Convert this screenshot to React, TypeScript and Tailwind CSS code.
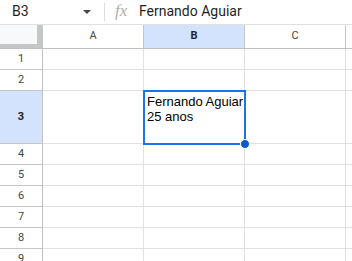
import React from "react";

const cols = ["A", "B", "C", "D"];
const rows: { n: number; h: string }[] = [
  { n: 1, h: "h-[21px]" },
  { n: 2, h: "h-[21px]" },
  { n: 3, h: "h-[53px]" },
  { n: 4, h: "h-[21px]" },
  { n: 5, h: "h-[21px]" },
  { n: 6, h: "h-[21px]" },
  { n: 7, h: "h-[21px]" },
  { n: 8, h: "h-[21px]" },
  { n: 9, h: "h-[21px]" },
];

export default function App() {
  return (
    <div
      className="w-[352px] h-[261px] overflow-hidden bg-white"
      style={{ fontFamily: "Roboto, 'Liberation Sans', Arial, sans-serif" }}
    >
      {/* Formula bar */}
      <div className="h-[25px] border-b border-[#e0e0e0] flex items-start">
        <div className="w-[104px] flex items-start pl-[12px] pr-[13px] pt-[1px]">
          <span className="text-[14px] leading-[20px] text-[#1f1f1f] flex-1">B3</span>
          <svg width="8" height="4" viewBox="0 0 8 4" className="mt-[9px]">
            <path d="M0 0 L8 0 L4 4 Z" fill="#444746" />
          </svg>
        </div>
        <div className="w-px h-[18px] bg-[#dadce0] mt-[3px]" />
        <div className="flex items-start pl-[10px] pt-[1px]">
          <span
            className="italic text-[17px] leading-[20px] text-[#b0b0b0] w-[24px]"
            style={{ fontFamily: "'Liberation Serif', 'DejaVu Serif', serif" }}
          >
            fx
          </span>
          <span className="text-[14px] leading-[20px] text-[#1f1f1f]">
            Fernando Aguiar
          </span>
        </div>
      </div>

      {/* Grid */}
      <div className="relative">
        {/* Header row */}
        <div className="flex h-[24px] border-b border-[#c0c0c0]">
          <div className="w-[43px] shrink-0 bg-[#c4c7c5]">
            <div className="w-[37px] h-[19px] bg-[#f8f9fa]" />
          </div>
          {cols.map((c) => (
            <div
              key={c}
              className={
                c === "B"
                  ? "w-[101px] shrink-0 border-r border-[#c4c7c5] bg-[#d3e3fd] flex items-center justify-center text-[11px] font-bold text-[#1f1f1f]"
                  : "w-[101px] shrink-0 border-r border-[#c4c7c5] bg-white flex items-center justify-center text-[11px] text-[#444746]"
              }
            >
              {c === "D" ? "" : c}
            </div>
          ))}
        </div>

        {rows.map((r) => (
          <div key={r.n} className={`flex ${r.h}`}>
            <div
              className={
                r.n === 3
                  ? "w-[43px] shrink-0 border-r border-b border-r-[#c0c0c0] border-b-[#c4c7c5] bg-[#d3e3fd] flex items-center justify-center text-[11px] font-bold text-[#1f1f1f]"
                  : "w-[43px] shrink-0 border-r border-b border-r-[#c0c0c0] border-b-[#c4c7c5] bg-white flex items-center justify-center text-[11px] text-[#444746]"
              }
            >
              {r.n}
            </div>
            {cols.map((c) => (
              <div
                key={c}
                className="w-[101px] shrink-0 border-r border-b border-[#e1e1e1] bg-white"
              >
                {r.n === 3 && c === "B" ? (
                  <div
                    className="pl-[3px] pt-[3px] text-[13px] leading-[15px] text-black whitespace-nowrap"
                    style={{ fontFamily: "'Liberation Sans', Arial, sans-serif" }}
                  >
                    <div>Fernando Aguiar</div>
                    <div>25 anos</div>
                  </div>
                ) : null}
              </div>
            ))}
          </div>
        ))}

        {/* Selection */}
        <div className="absolute left-[143px] top-[65px] w-[103px] h-[55px] border-2 border-[#1a73e8] pointer-events-none" />
        <div className="absolute left-[240px] top-[114px] w-[10px] h-[10px] rounded-full bg-[#0b57d0] border border-white" />
      </div>
    </div>
  );
}
